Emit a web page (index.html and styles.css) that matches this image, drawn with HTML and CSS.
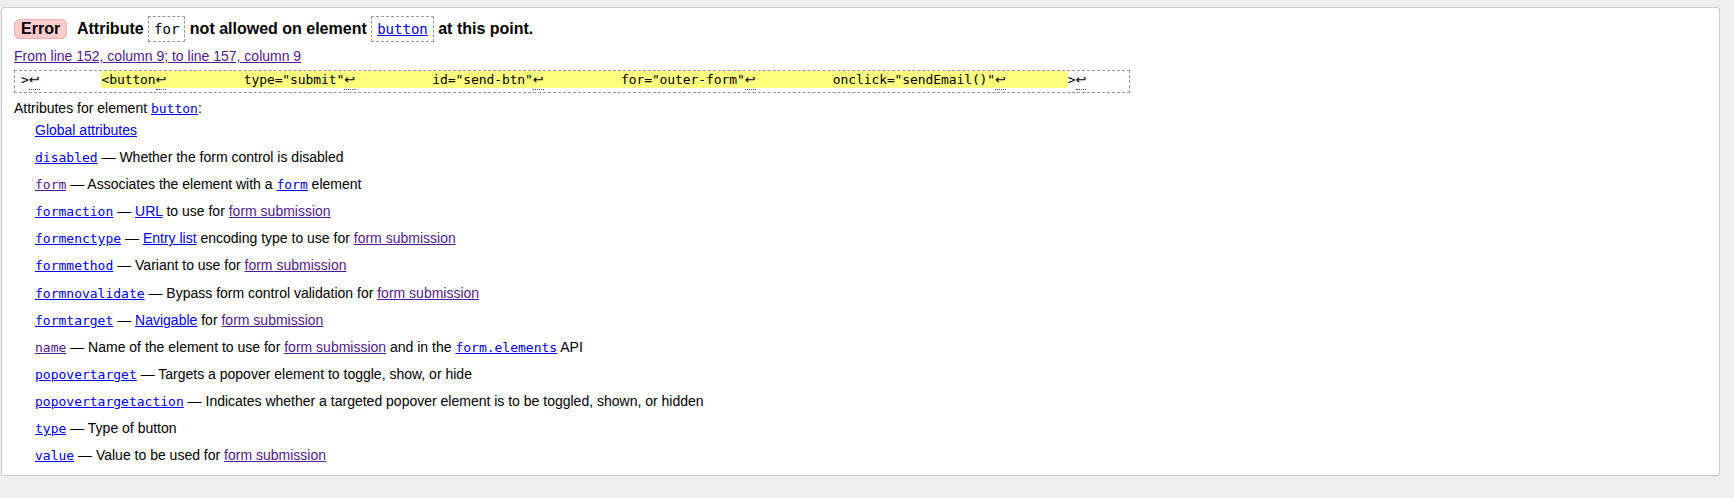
FILE: index.html
```html
<!DOCTYPE html>
<html lang="en">
<head>
<meta charset="utf-8">
<title>Validation message</title>
<link rel="stylesheet" href="styles.css">
</head>
<body>
<div class="panel">
  <p class="msg"><strong class="badge">Error</strong> <span class="title">Attribute <code class="box">for</code> not allowed on element <a class="box code" href="#button">button</a> at this point.</span></p>
  <p class="location"><a class="visited" href="#loc">From line 152, column 9; to line 157, column 9</a></p>
  <p class="extract-row"><code class="extract">&gt;<span class="lf">↩</span>        <mark><span>&lt;button</span><span class="lf">↩</span>          type="submit"<span class="lf">↩</span>          id="send-btn"<span class="lf">↩</span>          for="outer-form"<span class="lf">↩</span>          onclick="sendEmail()"<span class="lf">↩</span>        </mark>&gt;<span class="lf">↩</span>     </code></p>
  <dl class="attrs">
    <dt>Attributes for element <a class="code" href="#button">button</a>:</dt>
    <dd><a href="#global">Global attributes</a></dd>
    <dd><a class="code" href="#disabled">disabled</a> — Whether the form control is disabled</dd>
    <dd><a class="code visited" href="#form">form</a> — Associates the element with a <a class="code" href="#form-el">form</a> element</dd>
    <dd><a class="code" href="#formaction">formaction</a> — <a href="#url">URL</a> to use for <a class="visited" href="#fs">form submission</a></dd>
    <dd><a class="code" href="#formenctype">formenctype</a> — <a href="#entry">Entry list</a> encoding type to use for <a class="visited" href="#fs">form submission</a></dd>
    <dd><a class="code" href="#formmethod">formmethod</a> — Variant to use for <a class="visited" href="#fs">form submission</a></dd>
    <dd><a class="code" href="#formnovalidate">formnovalidate</a> — Bypass form control validation for <a class="visited" href="#fs">form submission</a></dd>
    <dd><a class="code" href="#formtarget">formtarget</a> — <a href="#nav">Navigable</a> for <a class="visited" href="#fs">form submission</a></dd>
    <dd><a class="code visited" href="#name">name</a> — Name of the element to use for <a class="visited" href="#fs">form submission</a> and in the <a class="code" href="#fe">form.elements</a> API</dd>
    <dd><a class="code" href="#popovertarget">popovertarget</a> — Targets a popover element to toggle, show, or hide</dd>
    <dd><a class="code" href="#popovertargetaction">popovertargetaction</a> — Indicates whether a targeted popover element is to be toggled, shown, or hidden</dd>
    <dd><a class="code" href="#type">type</a> — Type of button</dd>
    <dd><a class="code" href="#value">value</a> — Value to be used for <a class="visited" href="#fs">form submission</a></dd>
  </dl>
</div>
</body>
</html>
```
FILE: styles.css
```css
html, body {
  margin: 0;
  padding: 0;
}
body {
  background: #eeeeee;
  font-family: "Liberation Sans", Arial, sans-serif;
  font-size: 14px;
  color: #000;
  padding: 7px 14px 0 1px;
}
.panel {
  background: #fff;
  border: 1px solid #cccccc;
  border-radius: 3px;
  padding: 9px 12px 6px 12px;
}
a {
  color: #0000ee;
}
a.visited {
  color: #551a8b;
}
code, .code {
  font-family: "DejaVu Sans Mono", "Liberation Mono", monospace;
  font-size: 13px;
}
.msg {
  margin: 0;
  line-height: 24px;
  font-size: 16px;
  font-weight: bold;
}
.badge {
  display: inline-block;
  line-height: 18px;
  padding: 0 6px;
  background: #ffcccc;
  border: 1px solid #f4b0b0;
  border-radius: 5px;
  margin-right: 6px;
}
.msg .box {
  font-size: 14px;
}
.box {
  border: 1px dashed #999999;
  padding: 4px 5px;
  font-weight: normal;
}
.location {
  margin: 6px 0 0 0;
  line-height: 18px;
}
.extract-row {
  margin: 5px 0 0 0;
  line-height: 17px;
}
.extract {
  display: inline-block;
  white-space: pre;
  border: 1px dashed #999999;
  padding: 0 4px 4px 6px;
  line-height: 17px;
  letter-spacing: -0.1px;
}
.extract mark {
  background: #ffff80;
  color: #000;
  padding: 1px 0;
}
.lf {
  font-family: "DejaVu Sans", sans-serif;
  letter-spacing: 0;
  border-bottom: 1px dotted #555;
  padding-bottom: 2px;
}
.attrs {
  margin: 7px 0 0 0;
}
.attrs dt {
  line-height: 16px;
}
.attrs dd {
  margin: 0 0 0 21px;
  line-height: 27.1px;
}
```
